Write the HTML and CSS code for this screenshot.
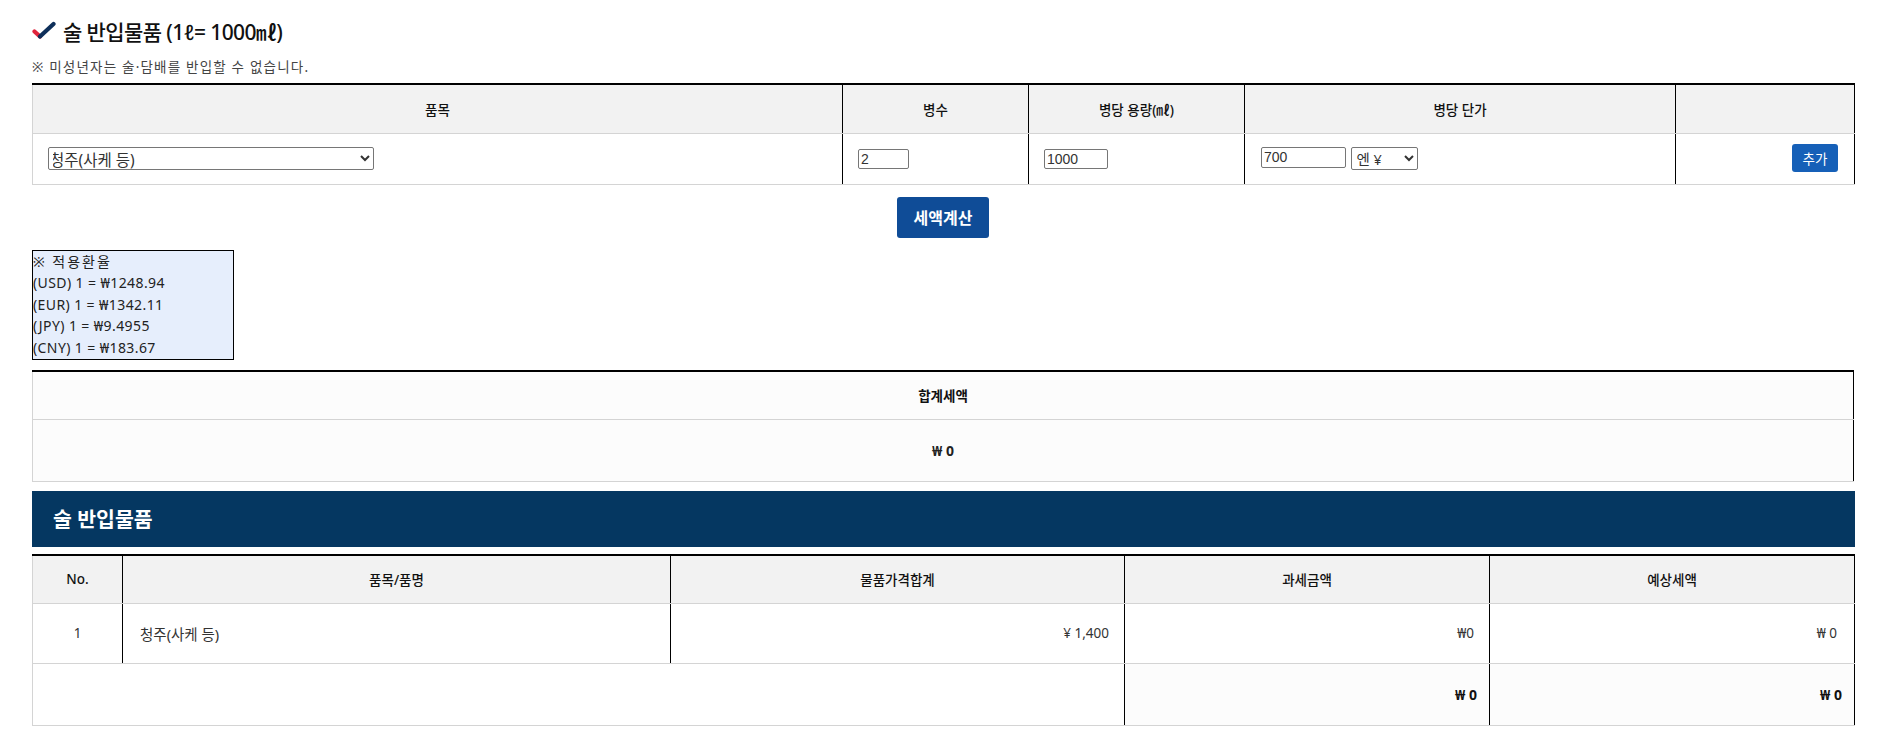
FILE: index.html
```html
<!DOCTYPE html>
<html lang="ko">
<head>
<meta charset="utf-8">
<title>술 반입물품</title>
<link rel="stylesheet" href="styles.css">
</head>
<body>
<div class="page">
  <h2 class="title">
    <svg class="check" width="24" height="20" viewBox="0 0 24 20" aria-hidden="true">
      <path d="M2.5 10.5 L8 15.5" stroke="#e0243c" stroke-width="4.2" stroke-linecap="round" fill="none"/>
      <path d="M8 15.5 L21.5 3" stroke="#0e2f5a" stroke-width="4.2" stroke-linecap="round" fill="none"/>
    </svg>
    <span>술 반입물품 (1ℓ= 1000㎖)</span>
  </h2>
  <p class="notice">※ 미성년자는 술·담배를 반입할 수 없습니다.</p>

  <table class="grid input-table">
    <colgroup>
      <col style="width:810px"><col style="width:186px"><col style="width:216px"><col style="width:431px"><col style="width:179px">
    </colgroup>
    <thead>
      <tr>
        <th>품목</th>
        <th>병수</th>
        <th>병당 용량(㎖)</th>
        <th>병당 단가</th>
        <th></th>
      </tr>
    </thead>
    <tbody>
      <tr>
        <td>
          <select class="sel-item">
            <option>청주(사케 등)</option>
          </select>
        </td>
        <td><input class="in-qty" type="text" value="2"></td>
        <td><input class="in-vol" type="text" value="1000"></td>
        <td class="price-cell">
          <input class="in-price" type="text" value="700">
          <select class="sel-cur"><option>엔 ¥</option></select>
        </td>
        <td class="right"><button class="btn-add">추가</button></td>
      </tr>
    </tbody>
  </table>

  <div class="calc-wrap"><button class="btn-calc">세액계산</button></div>

  <div class="rates">
    <div class="rates-title">※ 적용환율</div>
    <div>(USD) 1 = ₩1248.94</div>
    <div>(EUR) 1 = ₩1342.11</div>
    <div>(JPY) 1 = ₩9.4955</div>
    <div>(CNY) 1 = ₩183.67</div>
  </div>

  <table class="grid total-table">
    <tr><th class="b">합계세액</th></tr>
    <tr><td class="b center big">₩ 0</td></tr>
  </table>

  <div class="bar">술 반입물품</div>

  <table class="grid list-table">
    <colgroup>
      <col style="width:90px"><col style="width:548px"><col style="width:454px"><col style="width:365px"><col style="width:365px">
    </colgroup>
    <thead>
      <tr>
        <th>No.</th>
        <th>품목/품명</th>
        <th>물품가격합계</th>
        <th>과세금액</th>
        <th>예상세액</th>
      </tr>
    </thead>
    <tbody>
      <tr class="row1">
        <td class="center">1</td>
        <td class="cell-name"><span class="name-text">청주(사케 등)</span></td>
        <td class="num">¥ 1,400</td>
        <td class="num">₩0</td>
        <td class="num last">₩ 0</td>
      </tr>
      <tr class="row2">
        <td colspan="3" class="blank"></td>
        <td class="num b sum">₩ 0</td>
        <td class="num b sum last">₩ 0</td>
      </tr>
    </tbody>
  </table>
</div>
</body>
</html>
```

FILE: styles.css
```css
* { box-sizing: border-box; }
html, body { margin: 0; padding: 0; background: #fff; }
body {
  font-family: "Noto Sans", "Noto Sans CJK KR", sans-serif;
  font-size: 13px;
  color: #222;
}
.page { padding: 17px 29px 20px 32px; }

.title {
  margin: 0;
  height: 30px;
  line-height: 30px;
  font-size: 21px;
  font-weight: 500;
  color: #111;
  display: flex;
  align-items: center;
  gap: 7px;
  letter-spacing: -0.6px;
}
.check { display: block; margin-top: -3px; }

.notice {
  margin: 11px 0 0;
  line-height: 18px;
  font-size: 13.5px;
  letter-spacing: 1.2px;
  color: #444;
}

.grid {
  width: 1822px;
  border-collapse: collapse;
  table-layout: fixed;
  border-top: 2px solid #000;
}
.grid th, .grid td {
  padding: 0;
  border-bottom: 1px solid #d4d4d4;
  border-right: 1px solid #000;
  font-size: 13px;
}
.grid th:first-child, .grid td:first-child { border-left: 1px solid #d4d4d4; }
.grid th { background: #f2f2f2; font-weight: 500; color: #111; text-align: center; font-size: 13.5px; }
.b { font-weight: 700 !important; }
.center { text-align: center; }
.right { text-align: right; }
.grid td.big { font-size: 14px; }

.input-table { margin-top: 7px; }
.input-table th { height: 49px; }
.input-table td { height: 51px; padding: 0 15px; }
.input-table td.right { padding-right: 16px; }

.sel-item {
  width: 326px; height: 23px;
  font-family: inherit; font-size: 15.5px; color: #333;
  border: 1px solid #767676; border-radius: 2px; background: #fff;
  padding: 0; text-indent: -3px; vertical-align: middle;
}
.in-qty, .in-vol, .in-price {
  height: 20px;
  font-family: "Liberation Sans", "Noto Sans CJK KR", sans-serif; font-size: 14px; color: #333;
  border: 1px solid #767676; border-radius: 2px;
  padding: 0 2px; vertical-align: middle;
}
.in-qty { width: 51px; }
.in-vol { width: 64px; }
.in-price { width: 85px; height: 21px; margin-top: -3px; }
.price-cell { padding-left: 16px !important; }
.sel-cur {
  width: 67px; height: 23px; margin-left: 2px;
  font-family: inherit; font-size: 14.5px; color: #333;
  border: 1px solid #767676; border-radius: 2px; background: #fff;
  padding: 0;
  vertical-align: middle;
}
.btn-add {
  width: 46px; height: 28px;
  background: #1660b8; color: #fff;
  border: 0; border-radius: 3px;
  font-family: inherit; font-size: 13.5px;
  vertical-align: middle; margin-top: -1px;
}

.calc-wrap { display: flex; justify-content: center; margin-top: 12px; width: 1822px; }
.btn-calc {
  width: 92px; height: 41px;
  background: #0f4c97; color: #fff;
  border: 0; border-radius: 3px;
  font-family: inherit; font-size: 16px; font-weight: 700;
}

.rates {
  margin-top: 12px;
  width: 202px; height: 110px;
  border: 1px solid #000;
  background: #e6eefc;
  line-height: 21.6px;
  font-size: 14px;
  letter-spacing: 0.4px;
  color: #222;
  white-space: nowrap;
}
.rates-title { letter-spacing: 2px; }

.total-table { margin-top: 10px; }
.total-table th { height: 49px; background: #fcfcfc; }
.total-table td { height: 62px; background: #fcfcfc; }

.bar {
  margin-top: 9px;
  width: 1823px;
  height: 56px;
  line-height: 56px;
  background: #053761;
  color: #fff;
  font-size: 20.5px;
  font-weight: 700;
  padding-left: 21px;
}

.list-table { margin-top: 7px; }
.list-table th { height: 48px; }
.list-table .row1 td { height: 60px; color: #333; font-size: 13.5px; }
.list-table .row2 td { height: 62px; font-size: 14px; }
.list-table td.cell-name { padding-left: 17px !important; }
.name-text { font-size: 14.5px; }
.list-table .num { text-align: right; padding-right: 15px; }
.list-table .num.last { padding-right: 17px; }
.list-table .sum { background: #fcfcfc; color: #111; padding-right: 12px; }
.list-table .sum.last { padding-right: 12px; }
.list-table .blank { background: #fff; }
```
